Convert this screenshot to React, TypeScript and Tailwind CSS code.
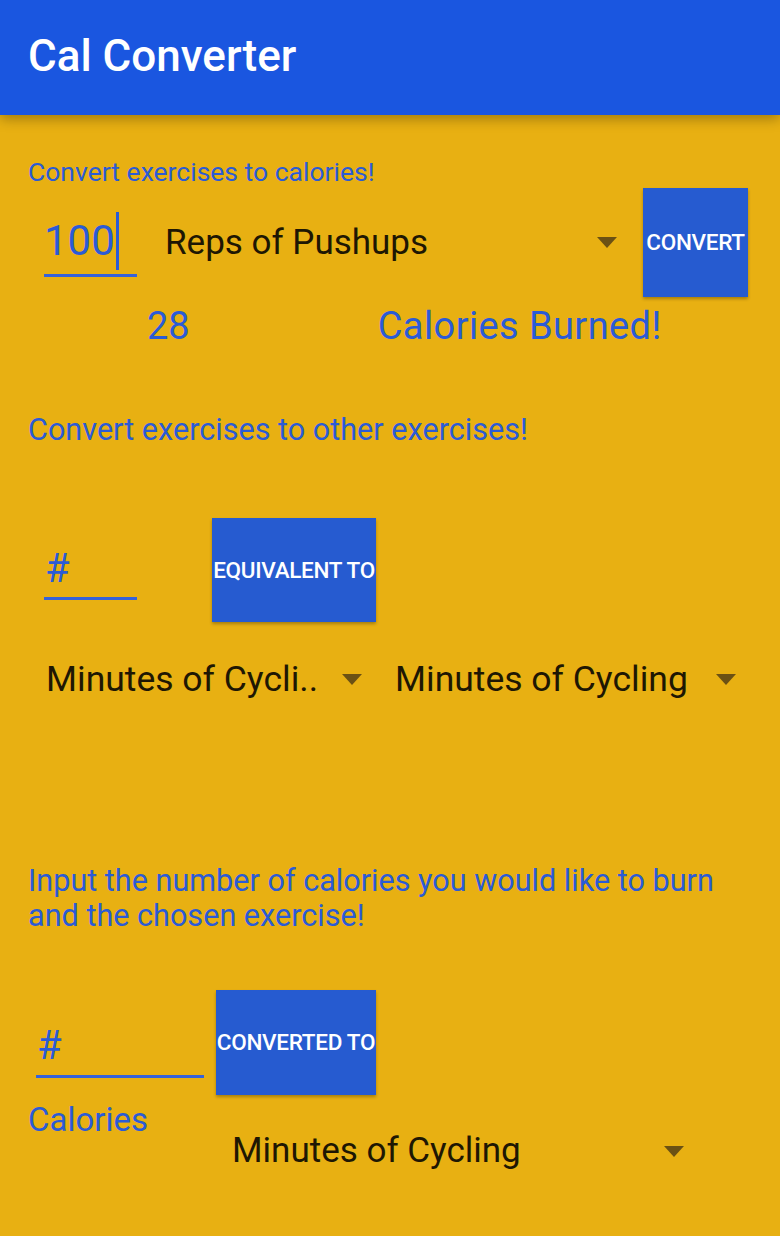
import React from "react";

const blue = "text-[#2b5bd6]";

function Arrow() {
  return (
    <svg width="20" height="11" viewBox="0 0 20 11" className="shrink-0">
      <polygon points="0,0 20,0 10,11" fill="#6b5114" />
    </svg>
  );
}

function BlueButton({ label, className }: { label: string; className: string }) {
  return (
    <button
      className={`flex items-center justify-center bg-[#265bd0] text-white text-[22.5px] font-medium leading-none tracking-[-0.3px] whitespace-nowrap shadow-[0_2px_3px_rgba(0,0,0,0.28)] shrink-0 ${className}`}
    >
      {label}
    </button>
  );
}

export default function App() {
  return (
    <div className="min-h-[1236px] bg-[#e8b012] font-['Roboto',sans-serif]">
      {/* App bar */}
      <header className="relative z-10 h-[115px] bg-[#1a56e0] px-[28px] flex items-center shadow-[0_4px_12px_rgba(0,0,0,0.3)]">
        <h1 className="text-white text-[44px] font-medium leading-none pb-[4px]">Cal Converter</h1>
      </header>

      <main className="px-[28px]">
        {/* exercise -> calories */}
        <p className={`${blue} text-[26.5px] leading-[30px] pt-[42px]`}>Convert exercises to calories!</p>

        <div className="mt-[1px] flex items-start pl-[16px]">
          <div className="w-[93px] mt-[29px] border-b-[3px] border-[#3562d9] pb-[9px] flex items-center">
            <span className={`${blue} text-[42px] leading-[48px]`}>100</span>
            <span className="w-[3px] h-[58px] bg-[#2b5bd6] ml-[1px] -my-[5px]" />
          </div>
          <div className="ml-[28px] flex-1 h-[109px] flex items-center justify-between pr-[26px]">
            <span className="text-[35px] leading-[40px] text-[#1e1703]">Reps of Pushups</span>
            <Arrow />
          </div>
          <BlueButton label="CONVERT" className="w-[105px] h-[109px] mr-[4px]" />
        </div>

        <div className={`${blue} mt-[7px] flex text-[38px] leading-[44px] pl-[119px]`}>
          <span>28</span>
          <span className="ml-[188px] tracking-[0.4px]">Calories Burned!</span>
        </div>

        {/* exercise -> exercise */}
        <p className={`${blue} text-[30.6px] leading-[36px] mt-[64px]`}>Convert exercises to other exercises!</p>

        <div className="mt-[70px] flex items-start pl-[16px]">
          <div className="w-[93px] mt-[28px] border-b-[3px] border-[#3562d9] pb-[5px]">
            <span className={`${blue} text-[40px] leading-[46px] pl-[1px]`}>#</span>
          </div>
          <BlueButton label="EQUIVALENT TO" className="ml-[75px] w-[164px] h-[104px]" />
        </div>

        <div className="mt-[37px] flex items-center text-[35.5px] leading-[40px] text-[#1e1703]">
          <div className="w-[350px] flex items-center justify-between pl-[18px] pr-[16px]">
            <span>Minutes of Cycli..</span>
            <Arrow />
          </div>
          <div className="w-[374px] flex items-center justify-between pl-[17px] pr-[16px]">
            <span>Minutes of Cycling</span>
            <Arrow />
          </div>
        </div>

        {/* calories -> exercise */}
        <p className={`${blue} text-[30.6px] leading-[35px] mt-[164px]`}>
          Input the number of calories you would like to burn
          <br />
          and the chosen exercise!
        </p>

        <div className="mt-[57px] flex items-start">
          <div className="w-[176px] shrink-0 flex flex-col">
            <div className="ml-[8px] mt-[33px] border-b-[3px] border-[#3562d9] pb-[6px]">
              <span className={`${blue} text-[40px] leading-[46px] pl-[1px]`}>#</span>
            </div>
            <span className={`${blue} text-[33px] leading-[38px] mt-[23px]`}>Calories</span>
          </div>
          <div className="ml-[12px] flex flex-col">
            <BlueButton label="CONVERTED TO" className="w-[160px] h-[105px]" />
            <div className="mt-[36px] w-[484px] flex items-center justify-between pl-[16px] pr-[16px]">
              <span className="text-[35px] leading-[40px] text-[#1e1703]">Minutes of Cycling</span>
              <Arrow />
            </div>
          </div>
        </div>
      </main>
    </div>
  );
}
